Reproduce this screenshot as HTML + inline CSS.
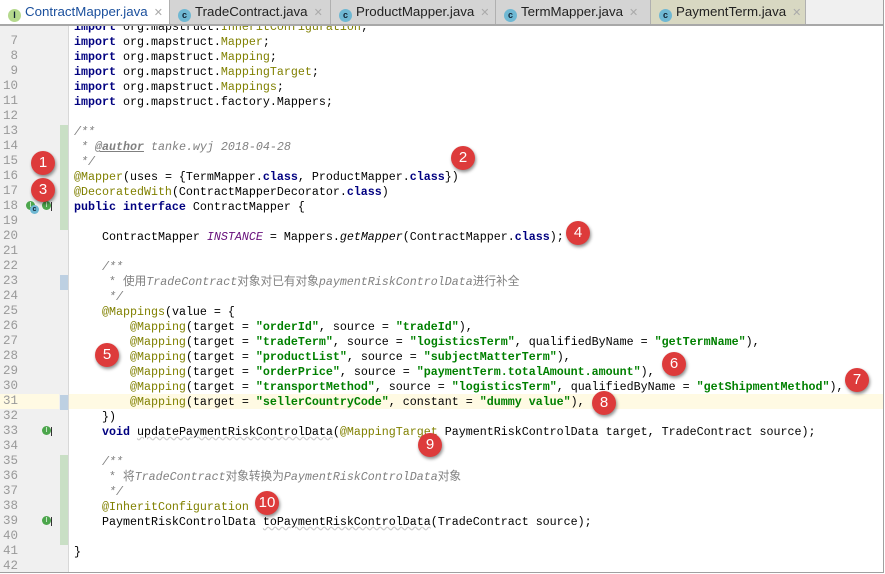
<!DOCTYPE html>
<html><head><meta charset="utf-8"><style>
body{margin:0;width:885px;height:574px;overflow:hidden;background:#fff;position:relative;font-family:"Liberation Sans","Noto Sans CJK SC",sans-serif}
#frame{position:absolute;left:0;top:0;width:883px;height:572px;border-right:1px solid #a0a0a0;border-bottom:1px solid #a0a0a0;background:#fff;overflow:hidden}
#gutter{position:absolute;left:0;top:0;width:68px;height:574px;background:#f0f0f0;border-right:1px solid #d8d8d8}
.ln{position:absolute;left:0;width:18px;text-align:right;font:12.5px "Liberation Mono",monospace;color:#999;height:15px;line-height:15px}
#code{position:absolute;left:74px;top:20px;font:11.67px/15px "Liberation Mono","Noto Sans CJK SC",monospace;color:#000;white-space:pre}
.k{color:#000080;font-weight:bold}.a{color:#808000}.s{color:#008000;font-weight:bold}.c{color:#808080;font-style:italic}.cn{color:#808080}
.t{color:#808080;font-weight:bold;font-style:italic;text-decoration:underline}.i{font-style:italic}.p{color:#660e7a;font-style:italic}
.w{text-decoration:underline wavy #ccc}
#tabs{position:absolute;left:0;top:0;width:885px;height:24px;background:#f0f0f0;border-bottom:2px solid #a8a8a8}
.tab{position:absolute;top:0;height:24px;font-size:13.3px;line-height:24px;color:#222;border-right:1px solid #b0b0b0;box-sizing:border-box;padding-left:8px;background:#d4d4d4;white-space:nowrap;overflow:hidden}
.ic{display:inline-block;width:13px;height:13px;border-radius:50%;background:#6fb8d3;color:#123;font-size:9px;line-height:13px;text-align:center;vertical-align:-2px;margin-right:4px;font-weight:bold}
.x{color:#aaa;margin-left:6px;font-size:11px}
.b{position:absolute;width:24px;height:24px;border-radius:50%;background:#dd3b3b;color:#fff;font:15px/24px "Liberation Sans",sans-serif;text-align:center;box-shadow:1px 2px 3px rgba(0,0,0,.45)}
.gi{position:absolute;width:9px;height:9px;border-radius:50%;background:#4ca64c;color:#fff;font-size:7px;line-height:9px;text-align:center}
.ar{position:absolute;width:1px;height:9px;background:#333}
</style></head><body><div id="frame">
<div style="position:absolute;left:0;top:394px;width:885px;height:15px;background:#fffae3"></div>
<div id="gutter"></div>
<div style="position:absolute;left:60px;top:125px;width:8px;height:105px;background:#c9dfc5"></div>
<div style="position:absolute;left:60px;top:455px;width:8px;height:90px;background:#c9dfc5"></div>
<div style="position:absolute;left:60px;top:275px;width:8px;height:15px;background:#bdd0e2"></div>
<div style="position:absolute;left:60px;top:395px;width:8px;height:15px;background:#bdd0e2"></div>
<div style="position:absolute;left:0;top:394px;width:59px;height:15px;background:#fffae3"></div>
<div id="lns"></div>
<div id="code"><span class="k">import</span> org.mapstruct.<span class="a">InheritConfiguration</span>;
<span class="k">import</span> org.mapstruct.<span class="a">Mapper</span>;
<span class="k">import</span> org.mapstruct.<span class="a">Mapping</span>;
<span class="k">import</span> org.mapstruct.<span class="a">MappingTarget</span>;
<span class="k">import</span> org.mapstruct.<span class="a">Mappings</span>;
<span class="k">import</span> org.mapstruct.factory.Mappers;

<span class="c">/**</span>
<span class="c"> * <span class="t">@author</span> tanke.wyj 2018-04-28</span>
<span class="c"> */</span>
<span class="a">@Mapper</span>(uses = {TermMapper.<span class="k">class</span>, ProductMapper.<span class="k">class</span>})
<span class="a">@DecoratedWith</span>(ContractMapperDecorator.<span class="k">class</span>)
<span class="k">public interface</span> ContractMapper {

    ContractMapper <span class="p">INSTANCE</span> = Mappers.<span class="i">getMapper</span>(ContractMapper.<span class="k">class</span>);

    <span class="c">/**</span>
<span class="cn">     * 使用<span class="i">TradeContract</span>对象对已有对象<span class="i">paymentRiskControlData</span>进行补全</span>
<span class="c">     */</span>
    <span class="a">@Mappings</span>(value = {
        <span class="a">@Mapping</span>(target = <span class="s">"orderId"</span>, source = <span class="s">"tradeId"</span>),
        <span class="a">@Mapping</span>(target = <span class="s">"tradeTerm"</span>, source = <span class="s">"logisticsTerm"</span>, qualifiedByName = <span class="s">"getTermName"</span>),
        <span class="a">@Mapping</span>(target = <span class="s">"productList"</span>, source = <span class="s">"subjectMatterTerm"</span>),
        <span class="a">@Mapping</span>(target = <span class="s">"orderPrice"</span>, source = <span class="s">"paymentTerm.totalAmount.amount"</span>),
        <span class="a">@Mapping</span>(target = <span class="s">"transportMethod"</span>, source = <span class="s">"logisticsTerm"</span>, qualifiedByName = <span class="s">"getShipmentMethod"</span>),
        <span class="a">@Mapping</span>(target = <span class="s">"sellerCountryCode"</span>, constant = <span class="s">"dummy value"</span>),
    })
    <span class="k">void</span> <span class="w">updatePaymentRiskControlData</span>(<span class="a">@MappingTarget</span> PaymentRiskControlData target, TradeContract source);

    <span class="c">/**</span>
<span class="cn">     * 将<span class="i">TradeContract</span>对象转换为<span class="i">PaymentRiskControlData</span>对象</span>
<span class="c">     */</span>
    <span class="a">@InheritConfiguration</span>
    PaymentRiskControlData <span class="w">toPaymentRiskControlData</span>(TradeContract source);

}
</div>
<div class="gi" style="left:26px;top:201px">I</div><div class="ic" style="position:absolute;left:30px;top:205px;width:9px;height:9px;font-size:7px;line-height:9px">c</div><div class="gi" style="left:42px;top:201px">I</div><div class="ar" style="left:51px;top:202px"></div>
<div class="gi" style="left:42px;top:426px">I</div><div class="ar" style="left:51px;top:427px"></div>
<div class="gi" style="left:42px;top:516px">I</div><div class="ar" style="left:51px;top:517px"></div>
<div id="tabs">
<div class="tab" style="left:0;width:170px;background:#fff"><span class="ic" style="background:#b5d98d">I</span><span style="color:#1a4f9c">ContractMapper.java</span><span class="x">✕</span></div>
<div class="tab" style="left:170px;width:161px"><span class="ic">c</span>TradeContract.java<span class="x">✕</span></div>
<div class="tab" style="left:331px;width:165px"><span class="ic">c</span>ProductMapper.java<span class="x">✕</span></div>
<div class="tab" style="left:496px;width:155px"><span class="ic">c</span>TermMapper.java<span class="x">✕</span></div>
<div class="tab" style="left:651px;width:155px;background:#d8d8c2"><span class="ic">c</span>PaymentTerm.java<span class="x">✕</span></div>
</div>
<div class="b" style="left:31px;top:151px">1</div>
<div class="b" style="left:451px;top:146px">2</div>
<div class="b" style="left:31px;top:178px">3</div>
<div class="b" style="left:566px;top:221px">4</div>
<div class="b" style="left:95px;top:343px">5</div>
<div class="b" style="left:662px;top:352px">6</div>
<div class="b" style="left:845px;top:368px">7</div>
<div class="b" style="left:592px;top:391px">8</div>
<div class="b" style="left:418px;top:433px">9</div>
<div class="b" style="left:255px;top:491px">10</div>
</div>
<script>
var h='';for(var n=7;n<=42;n++){h+='<div class="ln" style="top:'+(34+(n-7)*15)+'px">'+n+'</div>';}
document.getElementById('lns').innerHTML=h;
</script>
</body></html>
